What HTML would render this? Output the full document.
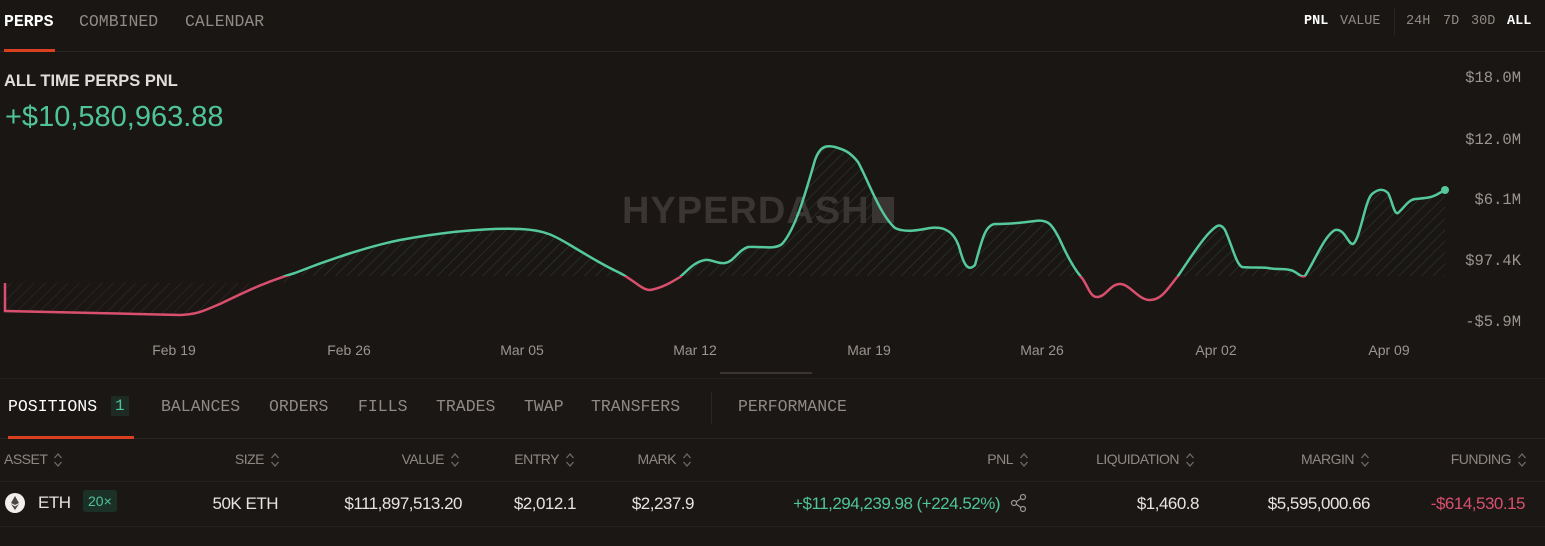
<!DOCTYPE html>
<html><head><meta charset="utf-8"><style>
*{margin:0;padding:0;box-sizing:border-box}
body{width:1545px;height:546px;background:#1a1614;color:#ddd;font-family:"Liberation Sans",sans-serif;position:relative;overflow:hidden}
.a{position:absolute;white-space:nowrap}
.m{font-family:"Liberation Mono",monospace}
.tab{font-size:16.5px;color:#8f8a86}
.h{font-size:14px;color:#8d8884;letter-spacing:-0.5px}
.v{font-size:17px;color:#e6e3e0;letter-spacing:-0.5px}
.ax{font-size:15.5px;color:#9a9591;text-align:right;width:100px}
.xl{font-size:14px;color:#9a9591;transform:translateX(-50%)}
.sort{display:inline-block;width:10px;height:18px;vertical-align:middle;margin-left:6px}
</style></head><body>
<div class="a m tab" style="left:4px;top:12px;color:#fff;font-weight:bold">PERPS</div>
<div class="a m tab" style="left:79px;top:12px">COMBINED</div>
<div class="a m tab" style="left:185px;top:12px">CALENDAR</div>
<div class="a" style="left:0;top:51px;width:1545px;height:1px;background:#2a2522"></div>
<div class="a" style="left:4px;top:49px;width:51px;height:3px;background:#d9401f"></div>
<div class="a m" style="left:1304px;top:14px;font-size:13.5px;color:#fff;font-weight:bold">PNL</div>
<div class="a m" style="left:1340px;top:14px;font-size:13.5px;color:#8f8a86">VALUE</div>
<div class="a" style="left:1394px;top:8px;width:1px;height:28px;background:#2a2522"></div>
<div class="a m" style="left:1406px;top:14px;font-size:13.5px;color:#8f8a86">24H</div>
<div class="a m" style="left:1443px;top:14px;font-size:13.5px;color:#8f8a86">7D</div>
<div class="a m" style="left:1471px;top:14px;font-size:13.5px;color:#8f8a86">30D</div>
<div class="a m" style="left:1507px;top:14px;font-size:13.5px;color:#fff;font-weight:bold">ALL</div>

<div class="a" style="left:4px;top:72px;font-size:16.5px;font-weight:bold;color:#e0ddda">ALL TIME PERPS PNL</div>
<div class="a" style="left:5px;top:101px;font-size:29px;color:#4fc49a">+$10,580,963.88</div>

<div class="a" style="left:622px;top:190px;font-size:38px;font-weight:bold;color:#3a3533;letter-spacing:1px">HYPERDASH<span style="display:inline-block;width:22px;height:26px;background:#3a3533;margin-left:2px"></span></div>

<div class="a m ax" style="left:1421px;top:69px">$18.0M</div>
<div class="a m ax" style="left:1421px;top:131px">$12.0M</div>
<div class="a m ax" style="left:1421px;top:191px">$6.1M</div>
<div class="a m ax" style="left:1421px;top:252px">$97.4K</div>
<div class="a m ax" style="left:1421px;top:313px">-$5.9M</div>

<svg class="a" style="left:0;top:0" width="1545" height="378">
<defs>
<pattern id="hg" width="8" height="8" patternUnits="userSpaceOnUse" patternTransform="rotate(45)"><line x1="0" y1="0" x2="0" y2="8" stroke="#2c3a33" stroke-width="1.2"/></pattern>
<pattern id="hr" width="8" height="8" patternUnits="userSpaceOnUse" patternTransform="rotate(45)"><line x1="0" y1="0" x2="0" y2="8" stroke="#3a2628" stroke-width="1.2"/></pattern>
<clipPath id="up"><rect x="0" y="0" width="1545" height="276"/></clipPath>
<clipPath id="dn"><rect x="0" y="276" width="1545" height="100"/></clipPath>
<path id="ln" d="M5,283 L5,311 L180,315 C200,314 205,310 220,304 C245,292 265,282 295,273 C330,259 370,246 400,240 C450,231 490,228 520,229 C545,230 555,236 570,245 C590,257 605,266 620,273 C635,281 642,290 650,290 C662,288 672,282 680,277 C688,270 694,262 705,260 C712,259 716,264 725,263 C735,261 738,250 748,247 C760,246 775,250 782,244 C795,230 805,195 815,160 C820,146 826,145 835,147 C845,150 850,152 858,162 C868,180 880,215 895,228 C905,233 920,230 930,228 C945,226 955,232 960,250 C964,265 968,272 975,265 C982,240 985,225 995,224 C1010,224 1020,223 1035,221 C1048,219 1052,224 1060,240 C1068,258 1075,270 1082,278 C1088,286 1090,297 1097,297 C1106,297 1110,284 1120,284 C1130,284 1138,300 1150,300 C1162,300 1168,288 1178,276 C1190,258 1202,240 1210,232 C1216,226 1220,222 1225,230 C1232,245 1236,264 1242,267 C1250,268 1260,267 1268,268 C1278,270 1282,268 1290,270 C1297,271 1300,278 1305,276 C1315,260 1325,235 1335,230 C1345,228 1348,245 1353,244 C1360,240 1365,200 1372,194 C1378,189 1383,188 1388,193 C1392,200 1394,215 1398,213 C1404,208 1408,200 1415,199 C1425,198 1430,198 1436,195 L1445,190"/>
</defs>
<path d="M5,283 L5,311 L180,315 C200,314 205,310 220,304 C245,292 265,282 295,273 C330,259 370,246 400,240 C450,231 490,228 520,229 C545,230 555,236 570,245 C590,257 605,266 620,273 C635,281 642,290 650,290 C662,288 672,282 680,277 C688,270 694,262 705,260 C712,259 716,264 725,263 C735,261 738,250 748,247 C760,246 775,250 782,244 C795,230 805,195 815,160 C820,146 826,145 835,147 C845,150 850,152 858,162 C868,180 880,215 895,228 C905,233 920,230 930,228 C945,226 955,232 960,250 C964,265 968,272 975,265 C982,240 985,225 995,224 C1010,224 1020,223 1035,221 C1048,219 1052,224 1060,240 C1068,258 1075,270 1082,278 C1088,286 1090,297 1097,297 C1106,297 1110,284 1120,284 C1130,284 1138,300 1150,300 C1162,300 1168,288 1178,276 C1190,258 1202,240 1210,232 C1216,226 1220,222 1225,230 C1232,245 1236,264 1242,267 C1250,268 1260,267 1268,268 C1278,270 1282,268 1290,270 C1297,271 1300,278 1305,276 C1315,260 1325,235 1335,230 C1345,228 1348,245 1353,244 C1360,240 1365,200 1372,194 C1378,189 1383,188 1388,193 C1392,200 1394,215 1398,213 C1404,208 1408,200 1415,199 C1425,198 1430,198 1436,195 L1445,190 L1445,283 Z" fill="url(#hg)" clip-path="url(#up)"/>
<path d="M5,283 L5,311 L180,315 C200,314 205,310 220,304 C245,292 265,282 295,273 L295,283 Z" fill="url(#hr)"/>
<use href="#ln" fill="none" stroke="#55c99c" stroke-width="2.5" clip-path="url(#up)"/>
<use href="#ln" fill="none" stroke="#d9506e" stroke-width="2.5" clip-path="url(#dn)"/>
<circle cx="1445" cy="190" r="4" fill="#55c99c"/>
<rect x="720" y="372" width="92" height="2" fill="#3a3532"/>
</svg>

<div class="a xl" style="left:174px;top:342px">Feb 19</div>
<div class="a xl" style="left:349px;top:342px">Feb 26</div>
<div class="a xl" style="left:522px;top:342px">Mar 05</div>
<div class="a xl" style="left:695px;top:342px">Mar 12</div>
<div class="a xl" style="left:869px;top:342px">Mar 19</div>
<div class="a xl" style="left:1042px;top:342px">Mar 26</div>
<div class="a xl" style="left:1216px;top:342px">Apr 02</div>
<div class="a xl" style="left:1389px;top:342px">Apr 09</div>

<div class="a" style="left:0;top:378px;width:1545px;height:168px;background:#1b1715;border-top:1px solid #26211f"></div>
<div class="a m tab" style="left:8px;top:397px;color:#fff">POSITIONS</div>
<div class="a m" style="left:111px;top:396px;font-size:16px;color:#4fc49a;background:#1e2a24;padding:1px 4px">1</div>
<div class="a m tab" style="left:161px;top:397px">BALANCES</div>
<div class="a m tab" style="left:269px;top:397px">ORDERS</div>
<div class="a m tab" style="left:358px;top:397px">FILLS</div>
<div class="a m tab" style="left:436px;top:397px">TRADES</div>
<div class="a m tab" style="left:524px;top:397px">TWAP</div>
<div class="a m tab" style="left:591px;top:397px">TRANSFERS</div>
<div class="a" style="left:711px;top:392px;width:1px;height:32px;background:#2c2724"></div>
<div class="a m tab" style="left:738px;top:397px">PERFORMANCE</div>
<div class="a" style="left:0;top:438px;width:1545px;height:1px;background:#2a2522"></div>
<div class="a" style="left:8px;top:436px;width:126px;height:3px;background:#d9401f"></div>

<svg width="0" height="0" style="position:absolute"><defs><symbol id="s" viewBox="0 0 10 18"><path d="M1.5,7 L5,3 L8.5,7 M1.5,11 L5,15 L8.5,11" fill="none" stroke="#6e6965" stroke-width="1.3"/></symbol></defs></svg>
<div class="a h" style="left:4px;top:451px">ASSET<svg class="sort"><use href="#s"/></svg></div>
<div class="a h" style="right:1265px;top:451px">SIZE<svg class="sort"><use href="#s"/></svg></div>
<div class="a h" style="right:1085px;top:451px">VALUE<svg class="sort"><use href="#s"/></svg></div>
<div class="a h" style="right:970px;top:451px">ENTRY<svg class="sort"><use href="#s"/></svg></div>
<div class="a h" style="right:853px;top:451px">MARK<svg class="sort"><use href="#s"/></svg></div>
<div class="a h" style="right:516px;top:451px">PNL<svg class="sort"><use href="#s"/></svg></div>
<div class="a h" style="right:350px;top:451px">LIQUIDATION<svg class="sort"><use href="#s"/></svg></div>
<div class="a h" style="right:175px;top:451px">MARGIN<svg class="sort"><use href="#s"/></svg></div>
<div class="a h" style="right:18px;top:451px">FUNDING<svg class="sort"><use href="#s"/></svg></div>
<div class="a" style="left:0;top:481px;width:1545px;height:1px;background:#26211f"></div>

<svg class="a" style="left:4px;top:492px" width="22" height="22"><circle cx="11" cy="11" r="10" fill="#f2f0ee"/><path d="M11,4 L7,11 L11,13 L15,11 Z M7,12 L11,18 L15,12 L11,14.5 Z" fill="#4a4644"/></svg>
<div class="a v" style="left:38px;top:493px">ETH</div>
<div class="a" style="left:83px;top:490px;font-size:14px;color:#4fc49a;background:#1b3027;padding:3px 5px;border-radius:3px">20×</div>
<div class="a v" style="right:1267px;top:494px">50K ETH</div>
<div class="a v" style="right:1083px;top:494px">$111,897,513.20</div>
<div class="a v" style="right:969px;top:494px">$2,012.1</div>
<div class="a v" style="right:851px;top:494px">$2,237.9</div>
<div class="a v" style="right:545px;top:494px;color:#4fc49a">+$11,294,239.98 (+224.52%)</div>
<svg class="a" style="left:1010px;top:493px" width="18" height="20"><circle cx="4" cy="10" r="2.5" fill="none" stroke="#9a9591" stroke-width="1.2"/><circle cx="13" cy="4" r="2.5" fill="none" stroke="#9a9591" stroke-width="1.2"/><circle cx="13" cy="16" r="2.5" fill="none" stroke="#9a9591" stroke-width="1.2"/><path d="M6,9 L11,5.5 M6,11 L11,14.5" stroke="#9a9591" stroke-width="1.2"/></svg>
<div class="a v" style="right:346px;top:494px">$1,460.8</div>
<div class="a v" style="right:175px;top:494px">$5,595,000.66</div>
<div class="a v" style="right:20px;top:494px;color:#d9506e">-$614,530.15</div>
<div class="a" style="left:0;top:526px;width:1545px;height:1px;background:#26211f"></div>
</body></html>
